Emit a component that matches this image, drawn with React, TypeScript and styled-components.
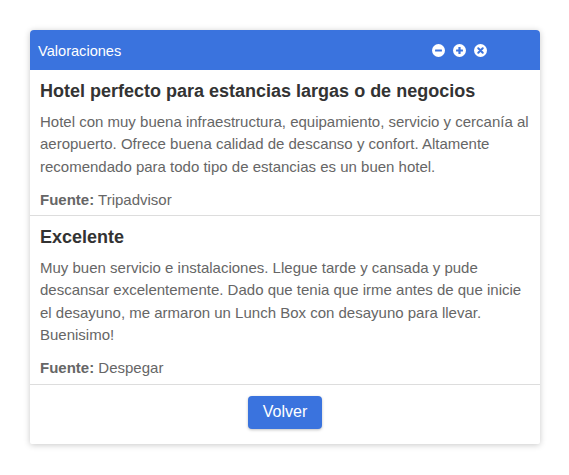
import React from "react";
import styled, { createGlobalStyle } from "styled-components";

const Global = createGlobalStyle`
  html, body { margin: 0; padding: 0; background: #ffffff; }
  body { font-family: "Liberation Sans", Arial, Helvetica, sans-serif; }
  * { box-sizing: border-box; }
`;

const Page = styled.div`
  padding: 30px 29px 30px 30px;
`;

const Card = styled.div`
  width: 510px;
  background: #fff;
  border-radius: 4px 4px 2px 2px;
  box-shadow: 0 1px 6px rgba(0, 0, 0, 0.22);
  overflow: hidden;
`;

const Header = styled.div`
  height: 40px;
  background: #3a73de;
  display: flex;
  align-items: center;
  padding: 0 53px 0 8px;
  color: #fff;
  font-size: 14.6px;
`;

const HeaderTitle = styled.div`
  flex: 1;
  padding-top: 1px;
`;

const Tools = styled.div`
  display: flex;
  gap: 8px;
  align-items: center;
  padding-top: 1px;
`;

const ToolIcon = styled.svg`
  width: 13px;
  height: 13px;
  display: block;
`;

const Review = styled.section<{ $divided?: boolean }>`
  padding: 9px 8px 4px 10px;
  border-top: ${(p) => (p.$divided ? "1px solid #dddddd" : "none")};
`;

const Title = styled.h2`
  margin: 0;
  font-size: 18px;
  line-height: 24px;
  font-weight: bold;
  color: #333333;
`;

const Text = styled.p`
  margin: 7.5px 0 0;
  font-size: 15px;
  line-height: 22.5px;
  color: #666666;
`;

const Source = styled.div`
  margin-top: 10.5px;
  font-size: 15px;
  line-height: 22.5px;
  color: #666666;
  b { font-weight: bold; }
`;

const Footer = styled.div`
  border-top: 1px solid #dddddd;
  display: flex;
  justify-content: center;
  padding: 11px 0 15px;
`;

const Button = styled.button`
  height: 33px;
  padding: 0 15px;
  border: none;
  border-radius: 4px;
  background: #3a73de;
  color: #fff;
  font-family: "Liberation Sans", Arial, sans-serif;
  font-size: 16px;
  box-shadow: 0 1px 3px rgba(0, 0, 0, 0.25);
  cursor: pointer;
`;

const MinusIcon = () => (
  <ToolIcon viewBox="0 0 14 14">
    <circle cx="7" cy="7" r="7" fill="#fff" />
    <rect x="3.3" y="5.8" width="7.4" height="2.4" rx="0.4" fill="#3a73de" />
  </ToolIcon>
);

const PlusIcon = () => (
  <ToolIcon viewBox="0 0 14 14">
    <circle cx="7" cy="7" r="7" fill="#fff" />
    <rect x="3.3" y="5.8" width="7.4" height="2.4" rx="0.4" fill="#3a73de" />
    <rect x="5.8" y="3.3" width="2.4" height="7.4" rx="0.4" fill="#3a73de" />
  </ToolIcon>
);

const CloseIcon = () => (
  <ToolIcon viewBox="0 0 14 14">
    <circle cx="7" cy="7" r="7" fill="#fff" />
    <path d="M4.6 4.6 L9.4 9.4 M9.4 4.6 L4.6 9.4" stroke="#3a73de" strokeWidth="2.2" strokeLinecap="round" />
  </ToolIcon>
);

const reviews = [
  {
    title: "Hotel perfecto para estancias largas o de negocios",
    text: "Hotel con muy buena infraestructura, equipamiento, servicio y cercanía al aeropuerto. Ofrece buena calidad de descanso y confort. Altamente recomendado para todo tipo de estancias es un buen hotel.",
    source: "Tripadvisor",
  },
  {
    title: "Excelente",
    text: "Muy buen servicio e instalaciones. Llegue tarde y cansada y pude descansar excelentemente. Dado que tenia que irme antes de que inicie el desayuno, me armaron un Lunch Box con desayuno para llevar. Buenisimo!",
    source: "Despegar",
  },
];

export default function App() {
  return (
    <>
      <Global />
      <Page>
        <Card>
          <Header>
            <HeaderTitle>Valoraciones</HeaderTitle>
            <Tools>
              <MinusIcon />
              <PlusIcon />
              <CloseIcon />
            </Tools>
          </Header>
          {reviews.map((r, i) => (
            <Review key={r.source} $divided={i > 0}>
              <Title>{r.title}</Title>
              <Text>{r.text}</Text>
              <Source>
                <b>Fuente:</b> {r.source}
              </Source>
            </Review>
          ))}
          <Footer>
            <Button>Volver</Button>
          </Footer>
        </Card>
      </Page>
    </>
  );
}
